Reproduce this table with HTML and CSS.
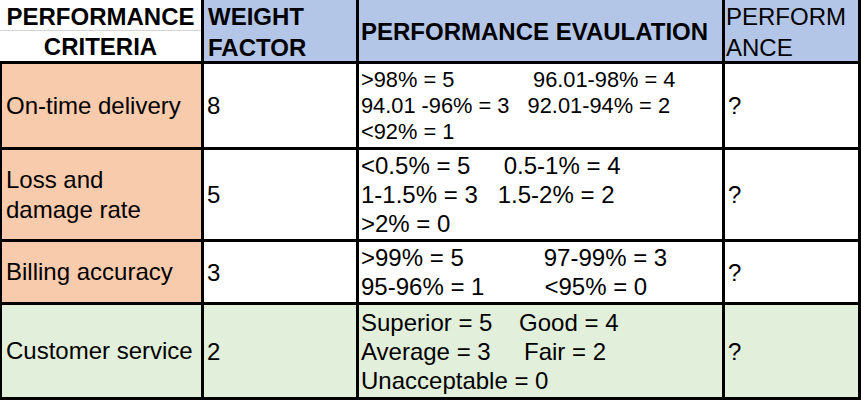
FILE: index.html
```html
<!DOCTYPE html>
<html>
<head>
<meta charset="utf-8">
<link rel="stylesheet" href="styles.css">
</head>
<body>
<div class="sheet">
  <div class="cell head-crit">
    <div class="hc-top">PERFORMANCE</div>
    <div class="hc-bot">CRITERIA</div>
  </div>
  <div class="cell head head-two bold">WEIGHT<br>FACTOR</div>
  <div class="cell head head-eval bold">PERFORMANCE EVAULATION</div>
  <div class="cell head head-two pad-perf">PERFORM<br>ANCE</div>

  <div class="cell crit">On-time delivery</div>
  <div class="cell num">8</div>
  <div class="cell eval small">&gt;98% = 5             96.01-98% = 4
94.01 -96% = 3   92.01-94% = 2
&lt;92% = 1</div>
  <div class="cell perf">?</div>

  <div class="cell crit">Loss and<br>damage rate</div>
  <div class="cell num">5</div>
  <div class="cell eval">&lt;0.5% = 5     0.5-1% = 4
1-1.5% = 3   1.5-2% = 2
&gt;2% = 0</div>
  <div class="cell perf">?</div>

  <div class="cell crit">Billing accuracy</div>
  <div class="cell num">3</div>
  <div class="cell eval">&gt;99% = 5            97-99% = 3
95-96% = 1         &lt;95% = 0</div>
  <div class="cell perf">?</div>

  <div class="cell crit green">Customer service</div>
  <div class="cell num green">2</div>
  <div class="cell eval green">Superior = 5    Good = 4
Average = 3     Fair = 2
Unacceptable = 0</div>
  <div class="cell perf green">?</div>
</div>
</body>
</html>
```

FILE: styles.css
```css
html, body {
  margin: 0;
  padding: 0;
  background: #ffffff;
}

.sheet {
  display: grid;
  grid-template-columns: 201px 152px 363px 133px;
  grid-template-rows: 61px 83px 89px 60px 92px;
  gap: 3px;
  padding: 0 3px 3px 0;
  width: max-content;
  background: #000000;
  font-family: "Liberation Sans", Arial, sans-serif;
  font-size: 24px;
  color: #000000;
}

.cell {
  background: #ffffff;
  box-sizing: border-box;
  display: flex;
  align-items: center;
  line-height: 29px;
}

.bold {
  font-weight: bold;
}

.head-crit {
  flex-direction: column;
  align-items: stretch;
  font-weight: bold;
  text-align: center;
}

.hc-top {
  height: 31px;
  line-height: 33px;
  border-bottom: 1px solid #d4d4d4;
  box-sizing: border-box;
}

.hc-bot {
  height: 30px;
  line-height: 31px;
}

.head {
  background: #b4c6e7;
}

.head-two {
  align-items: flex-start;
  line-height: 31px;
  padding: 1px 0 0 4px;
}

.pad-perf {
  padding-left: 1px;
}

.head-eval {
  padding: 1px 0 0 2px;
}

.crit {
  background: #f8cbad;
  border-left: 2px solid #000000;
  padding-left: 4px;
  line-height: 30px;
}

.num {
  padding-left: 3px;
}

.eval {
  white-space: pre;
  padding-left: 2px;
}

.eval.small {
  font-size: 21.8px;
  line-height: 26px;
}

.perf {
  padding-left: 3px;
}

.green {
  background: #e2efda;
}
```
